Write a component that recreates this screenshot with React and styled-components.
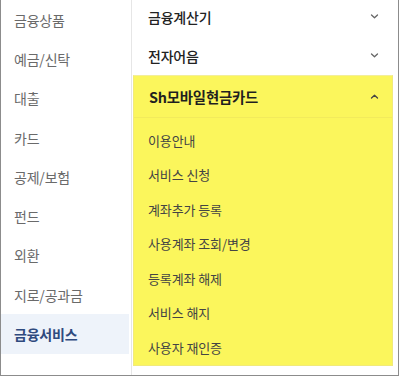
import React from "react";
import styled, { createGlobalStyle } from "styled-components";

const Global = createGlobalStyle`
  html, body { margin: 0; padding: 0; background: #fff; }
  body { font-family: "Noto Sans CJK KR", "Noto Sans", sans-serif; }
  * { box-sizing: border-box; }
`;

const Frame = styled.div`
  width: 399px;
  height: 376px;
  border: 1px solid #8c8c8c;
  border-top: none;
  display: flex;
  overflow: hidden;
  background: #fff;
`;

const Nav = styled.ul`
  list-style: none;
  margin: 0;
  padding: 0;
  width: 131px;
  flex: none;
  border-right: 1px solid #e6e6e6;
  display: flex;
  flex-direction: column;
`;

const NavItem = styled.li`
  height: 39.3px;
  display: flex;
  align-items: center;
  padding-left: 13px;
  margin-right: 2px;
  font-size: 14px;
  letter-spacing: -0.2px;
  color: ${(p) => (p.$active ? "#2f4a7e" : "#6a6a6a")};
  font-weight: ${(p) => (p.$active ? 700 : 400)};
  background: ${(p) => (p.$active ? "#eef3fa" : "transparent")};
`;

const Content = styled.div`
  flex: 1;
  padding: 0 5px 0 1px;
  display: flex;
  flex-direction: column;
`;

const MenuList = styled.div`
  margin-top: -3px;
  display: flex;
  flex-direction: column;
`;

const MenuRow = styled.div`
  height: 39px;
  display: flex;
  align-items: center;
  justify-content: space-between;
  padding: 0 14px 0 15px;
  font-size: 14px;
  font-weight: 500;
  color: #222;
  letter-spacing: -0.2px;
`;

const OpenGroup = styled.div`
  background: #fbf65c;
  border: 1px solid #f1ea7a;
  border-top-color: #f3ee9a;
  display: flex;
  flex-direction: column;
`;

const GroupHeader = styled.div`
  height: 42px;
  display: flex;
  align-items: center;
  justify-content: space-between;
  padding: 0 13px 1px 15px;
  font-size: 14.4px;
  font-weight: 700;
  color: #1f1f1f;
  letter-spacing: -0.2px;
  border-bottom: 1px solid #f2eb5c;
`;

const SubList = styled.ul`
  list-style: none;
  margin: 0;
  padding: 5px 0 0 0;
  display: flex;
  flex-direction: column;
`;

const SubItem = styled.li`
  height: 34.5px;
  display: flex;
  align-items: center;
  padding-left: 14px;
  font-size: 13px;
  color: #444;
  letter-spacing: -0.1px;
`;

const Chevron = ({ up }) => (
  <svg width="9" height="5" viewBox="0 0 9 5" style={{ flex: "none" }}>
    <path
      d={up ? "M1.5 4 L4.5 1.2 L7.5 4" : "M1.5 1 L4.5 3.8 L7.5 1"}
      fill="none"
      stroke={up ? "#444" : "#666"}
      strokeWidth="1.3"
      strokeLinecap="round"
      strokeLinejoin="round"
    />
  </svg>
);

const navItems = [
  "금융상품",
  "예금/신탁",
  "대출",
  "카드",
  "공제/보험",
  "펀드",
  "외환",
  "지로/공과금",
  "금융서비스",
];

const subItems = [
  "이용안내",
  "서비스 신청",
  "계좌추가 등록",
  "사용계좌 조회/변경",
  "등록계좌 해제",
  "서비스 해지",
  "사용자 재인증",
];

export default function App() {
  return (
    <>
      <Global />
      <Frame>
        <Nav>
          {navItems.map((n) => (
            <NavItem key={n} $active={n === "금융서비스"}>
              {n}
            </NavItem>
          ))}
        </Nav>
        <Content>
          <MenuList>
            <MenuRow>
              <span>금융계산기</span>
              <Chevron />
            </MenuRow>
            <MenuRow>
              <span>전자어음</span>
              <Chevron />
            </MenuRow>
          </MenuList>
          <OpenGroup>
            <GroupHeader>
              <span>Sh모바일현금카드</span>
              <Chevron up />
            </GroupHeader>
            <SubList>
              {subItems.map((s) => (
                <SubItem key={s}>{s}</SubItem>
              ))}
            </SubList>
          </OpenGroup>
        </Content>
      </Frame>
    </>
  );
}
